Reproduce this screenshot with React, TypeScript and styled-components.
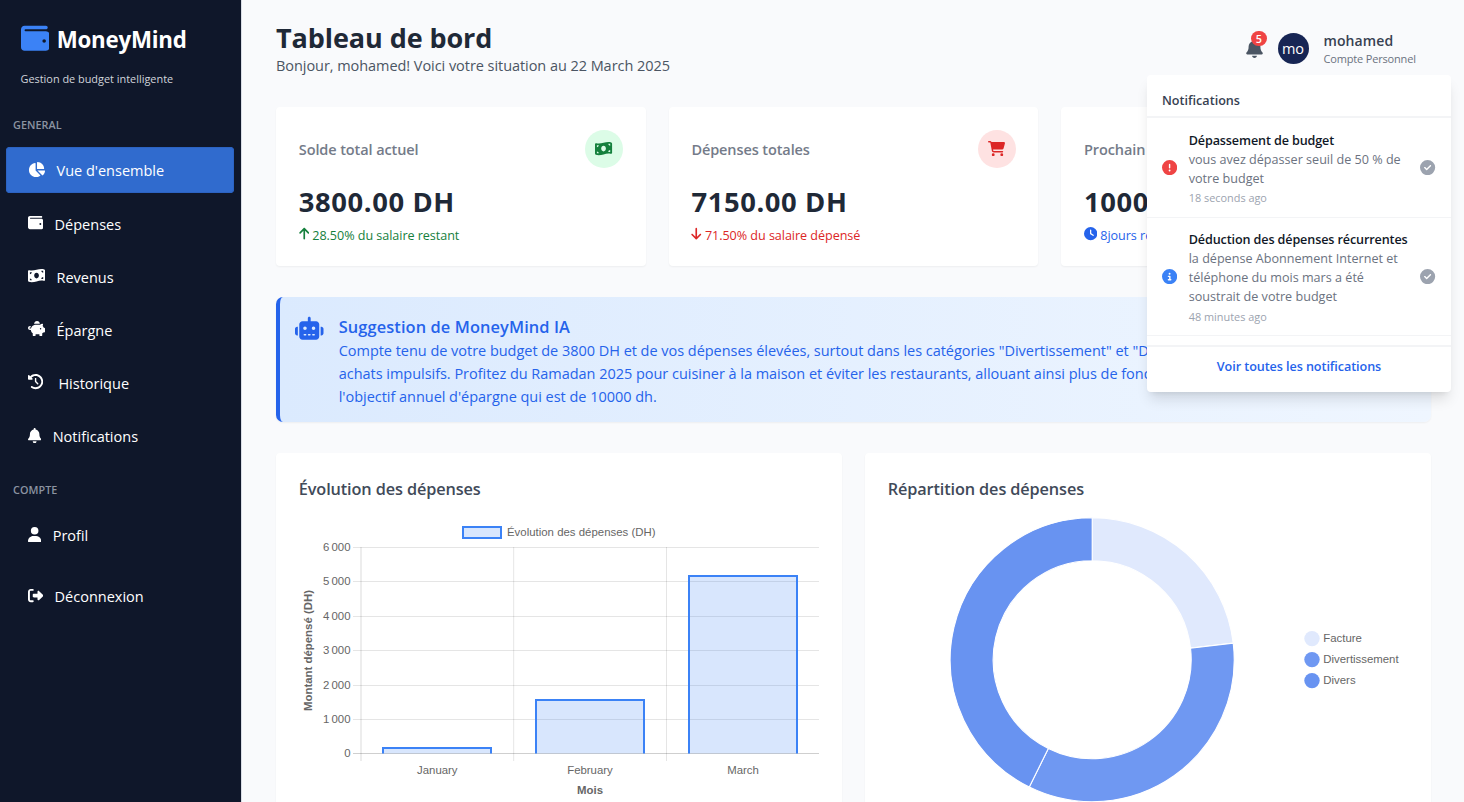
import React from "react";
import styled, { createGlobalStyle, css } from "styled-components";
import {
  FaWallet,
  FaChartPie,
  FaMoneyBillWave,
  FaPiggyBank,
  FaClockRotateLeft,
  FaBell,
  FaUser,
  FaRightFromBracket,
  FaArrowUp,
  FaArrowDown,
  FaCartShopping,
  FaClock,
  FaRobot,
  FaCircleExclamation,
  FaCircleInfo,
  FaCircleCheck,
  FaCalendar,
} from "react-icons/fa6";

const GlobalStyle = createGlobalStyle`
  *, *::before, *::after { box-sizing: border-box; }
  body {
    margin: 0;
    font-family: "Open Sans", "Noto Sans", sans-serif;
    background: #f9fafb;
    overflow: hidden;
  }
  h1, h2, h3, p { margin: 0; }
  svg { display: block; flex-shrink: 0; }
`;

const Page = styled.div`
  display: flex;
  width: 1464px;
  height: 802px;
  overflow: hidden;
  background: #f9fafc;
`;

/* Sidebar */

const Sidebar = styled.aside`
  width: 242px;
  flex-shrink: 0;
  background: #0f172a;
  border-right: 1px solid #d9dde5;
  color: #fff;
`;

const Brand = styled.div`
  display: flex;
  align-items: center;
  gap: 7.7px;
  padding: 20px 0 0 20.5px;
  height: 56px;
  color: #3b82f6;
`;

const BrandName = styled.span`
  color: #fff;
  font-size: 22.3px;
  line-height: 30px;
  font-weight: 700;
  letter-spacing: -0.22px;
  padding-top: 3px;
`;

const Tagline = styled.p`
  margin: 14px 0 0 20.5px;
  font-size: 10.9px;
  line-height: 18px;
  color: #d1d5db;
  white-space: nowrap;
`;

const SectionLabel = styled.div<{ $top: number }>`
  margin-top: ${(p) => p.$top}px;
  padding-left: 13px;
  font-size: 10.8px;
  line-height: 16px;
  font-weight: 600;
  letter-spacing: 0.05px;
  color: #8b93a1;
`;

const NavItem = styled.a<{ $active?: boolean; $gap?: number; $top?: number }>`
  display: flex;
  align-items: center;
  gap: ${(p) => p.$gap ?? 11.4}px;
  height: 45.6px;
  margin: ${(p) => p.$top ?? 7.6}px 7.3px 0 5.5px;
  padding: 4px 22.5px 0;
  border-radius: 4px;
  font-size: 14.5px;
  line-height: 22.8px;
  color: #fff;
  ${(p) =>
    p.$active &&
    css`
      background: #306bce;
      box-shadow: inset 0 0 0 1px #2c63c2;
    `}
  svg {
    margin-top: -5px;
  }
`;

/* Main column */

const Main = styled.main`
  flex: 1;
  padding: 22px 33px 0 34px;
`;

const Header = styled.header`
  position: relative;
  display: flex;
  justify-content: space-between;
  height: 85px;
`;

const Title = styled.h1`
  margin-top: -1px;
  font-size: 27px;
  line-height: 34px;
  font-weight: 700;
  color: #1f2937;
  letter-spacing: -0.08px;
`;

const Subtitle = styled.p`
  margin-top: 1px;
  font-size: 14.5px;
  line-height: 20px;
  letter-spacing: -0.055px;
  color: #4b5563;
  white-space: nowrap;
`;

const Account = styled.div`
  display: flex;
  align-items: flex-start;
  padding: 8px 15px 0 0;
`;

const BellWrap = styled.div`
  position: relative;
  margin: 9px 15px 0 0;
  color: #4b5563;
`;

const Badge = styled.span`
  position: absolute;
  top: -8.5px;
  left: 5.5px;
  width: 15.5px;
  height: 15.5px;
  border-radius: 50%;
  background: #ef4444;
  color: #fff;
  font-size: 10.8px;
  line-height: 15.5px;
  font-weight: 600;
  text-align: center;
`;

const Avatar = styled.div`
  width: 31px;
  height: 31px;
  margin: 2.5px 15px 0 0;
  border-radius: 50%;
  background: #172554;
  color: #fff;
  font-size: 14.5px;
  line-height: 31px;
  text-align: center;
`;

const UserName = styled.div`
  font-size: 14px;
  line-height: 22px;
  font-weight: 600;
  letter-spacing: 0.1px;
  color: #374151;
`;

const UserKind = styled.div`
  width: 92.5px;
  margin-top: -1px;
  font-size: 11px;
  line-height: 15px;
  letter-spacing: -0.17px;
  color: #6b7280;
  white-space: nowrap;
`;

/* Notifications dropdown */

const Dropdown = styled.section`
  position: absolute;
  z-index: 5;
  top: 53px;
  right: -20px;
  width: 304px;
  height: 317px;
  background: #fff;
  border-radius: 4px;
  box-shadow: 0 9.5px 14px -3px rgba(0, 0, 0, 0.12), 0 4px 6px -4px rgba(0, 0, 0, 0.1);
`;

const DropdownTitle = styled.h3`
  height: 43px;
  padding: 16px 15px 0;
  border-bottom: 2px solid #f3f4f6;
  font-size: 12.6px;
  line-height: 20px;
  font-weight: 600;
  color: #374151;
`;

const Notice = styled.article<{ $height: number }>`
  display: flex;
  align-items: center;
  height: ${(p) => p.$height}px;
  padding: 0 15.5px 0 15px;
  border-bottom: 1px solid #f3f4f6;
`;

const NoticeBody = styled.div`
  flex: 1;
  margin-left: 11.5px;
  padding-top: 3px;
  white-space: nowrap;
`;

const NoticeTitle = styled.div`
  font-size: 12.6px;
  line-height: 19px;
  font-weight: 600;
  letter-spacing: -0.12px;
  color: #111827;
`;

const NoticeText = styled.p`
  font-size: 12.6px;
  line-height: 19px;
  color: #6b7280;
`;

const NoticeTime = styled.div`
  margin-top: 1.5px;
  font-size: 10.9px;
  line-height: 18px;
  color: #9ca3af;
`;

const SeeAll = styled.a`
  display: block;
  margin-top: 9px;
  padding-top: 9px;
  border-top: 2px solid #f3f4f6;
  text-align: center;
  font-size: 12.6px;
  line-height: 22px;
  font-weight: 600;
  letter-spacing: -0.07px;
  color: #2563eb;
`;

/* Cards */

const StatGrid = styled.section`
  display: grid;
  grid-template-columns: repeat(3, 1fr);
  gap: 22.8px;
`;

const Card = styled.article`
  background: #fff;
  border-radius: 4px;
  box-shadow: 0 1px 2px rgba(0, 0, 0, 0.05);
`;

const StatCard = styled(Card)`
  height: 159px;
  padding: 22.5px 22.8px 0;
`;

const StatHead = styled.div`
  display: flex;
  align-items: center;
  justify-content: space-between;
`;

const StatLabel = styled.h2`
  padding-top: 2px;
  font-size: 14.5px;
  line-height: 22px;
  font-weight: 600;
  letter-spacing: -0.1px;
  color: #747b89;
`;

const IconDisc = styled.div<{ $bg: string; $fg: string }>`
  display: flex;
  align-items: center;
  justify-content: center;
  width: 38px;
  height: 38px;
  border-radius: 50%;
  background: ${(p) => p.$bg};
  color: ${(p) => p.$fg};
`;

const StatValue = styled.div`
  margin-top: 16px;
  font-size: 27.4px;
  line-height: 35px;
  font-weight: 700;
  letter-spacing: 0.6px;
  color: #1f2937;
`;

const StatNote = styled.div<{ $color: string }>`
  display: flex;
  align-items: center;
  gap: 3px;
  margin-top: 7px;
  font-size: 12.6px;
  line-height: 19px;
  letter-spacing: -0.05px;
  color: ${(p) => p.$color};
  svg {
    margin-top: -2px;
  }
`;

const Suggestion = styled.section`
  display: flex;
  gap: 15.2px;
  height: 125px;
  margin-top: 31px;
  padding: 17px 15px 0;
  border-left: 4px solid #2563eb;
  border-radius: 7px;
  background: linear-gradient(90deg, #dbeafe, #eff6ff);
  box-shadow: 0 1px 2px rgba(0, 0, 0, 0.05);
  color: #2563eb;
  white-space: nowrap;
  > svg {
    margin-top: -0.5px;
  }
`;

const SuggestionTitle = styled.h2`
  font-size: 16.4px;
  line-height: 25px;
  font-weight: 600;
  letter-spacing: 0.1px;
`;

const SuggestionText = styled.p`
  font-size: 14.5px;
  line-height: 23px;
  letter-spacing: -0.03px;
`;

const ChartGrid = styled.section`
  display: grid;
  grid-template-columns: repeat(2, 1fr);
  gap: 22.8px;
  margin-top: 31px;
`;

const ChartCard = styled(Card)`
  height: 380px;
  padding-top: 23px;
`;

const ChartTitle = styled.h2`
  padding-left: 22.8px;
  height: 34px;
  font-size: 16.3px;
  line-height: 27px;
  font-weight: 600;
  letter-spacing: -0.12px;
  color: #414a59;
`;

const ChartSvg = styled.svg`
  font-family: "Liberation Sans", Arial, sans-serif;
  font-size: 11.4px;
  fill: #666;
`;

const yTicks = ["6 000", "5 000", "4 000", "3 000", "2 000", "1 000", "0"];
const yLines = [547.5, 581.5, 616.5, 650.5, 685.5, 719.5, 753.5];
const bars = [
  { month: "January", x: 382, top: 747, center: 437.3 },
  { month: "February", x: 535, top: 699, center: 590 },
  { month: "March", x: 688, top: 575, center: 743 },
];

function BarChart() {
  return (
    <ChartSvg width="566" height="292" viewBox="276 510 566 292">
      <rect x="463" y="527" width="38" height="11" fill="#d8e6fd" stroke="#3b82f6" strokeWidth="2" />
      <text x="507" y="536" textLength="148.5">Évolution des dépenses (DH)</text>
      {yLines.map((y, i) => (
        <g key={y}>
          <line x1="353" x2="819" y1={y} y2={y} stroke={i === 6 ? "#cfcfcf" : "#e5e5e5"} />
          <text x="350.5" y={y + 3.4} textAnchor="end" wordSpacing="-1">{yTicks[i]}</text>
        </g>
      ))}
      <line x1="361" x2="361" y1="547" y2="761" stroke="#000" strokeOpacity="0.07" strokeWidth="2" />
      <line x1="513.7" x2="513.7" y1="547" y2="761" stroke="#000" strokeOpacity="0.1" />
      <line x1="666.5" x2="666.5" y1="547" y2="761" stroke="#000" strokeOpacity="0.1" />
      {bars.map((b) => (
        <g key={b.month}>
          <rect x={b.x} y={b.top} width="110" height={753.5 - b.top} fill="#3b82f6" fillOpacity="0.2" />
          <path
            d={`M${b.x + 1} 753.5V${b.top + 1}H${b.x + 109}V753.5`}
            fill="none"
            stroke="#3b82f6"
            strokeWidth="2"
          />
          <text x={b.center} y="774" textAnchor="middle">{b.month}</text>
        </g>
      ))}
      <text x="590" y="794" textAnchor="middle" fontWeight="700">Mois</text>
      <text transform="translate(312.4 650.5) rotate(-90)" textAnchor="middle" fontWeight="700" textLength="121">
        Montant dépensé (DH)
      </text>
    </ChartSvg>
  );
}

const CX = 1092.2;
const CY = 659.7;
const point = (r: number, deg: number) => {
  const a = ((deg - 90) * Math.PI) / 180;
  return `${CX + r * Math.cos(a)} ${CY + r * Math.sin(a)}`;
};
const ringSlice = (from: number, to: number) =>
  `M${point(142, from)}A142 142 0 0 1 ${point(142, to)}L${point(99, to)}A99 99 0 0 0 ${point(99, from)}Z`;

const slices = [
  { name: "Facture", from: 0, to: 83.3, color: "#e0e9fd" },
  { name: "Divertissement", from: 83.3, to: 206.3, color: "#6f98f2" },
  { name: "Divers", from: 206.3, to: 360, color: "#6893f1" },
];

function DoughnutChart() {
  return (
    <ChartSvg width="566" height="292" viewBox="865 510 566 292">
      {slices.map((s, i) => (
        <g key={s.name}>
          <path d={ringSlice(s.from, s.to)} fill={s.color} stroke="#fff" strokeWidth="1.1" />
          <circle cx="1312" cy={638.6 + i * 21} r="7.7" fill={s.color} />
          <text x="1323.3" y={642 + i * 21}>{s.name}</text>
        </g>
      ))}
    </ChartSvg>
  );
}

const IconBox = ({ icon: Icon, w, h }: { icon: React.ElementType; w: number; h: number }) => (
  <Icon width={w} height={h} size={undefined} style={{ width: w, height: h }} />
);

export default function App() {
  return (
    <>
      <GlobalStyle />
      <Page>
        <Sidebar>
          <Brand>
            <IconBox icon={FaWallet} w={28.5} h={28.5} />
            <BrandName>MoneyMind</BrandName>
          </Brand>
          <Tagline>Gestion de budget intelligente</Tagline>
          <SectionLabel $top={29}>GENERAL</SectionLabel>
          <NavItem $active $top={14}><IconBox icon={FaChartPie} w={17.1} h={15.2} />Vue d'ensemble</NavItem>
          <NavItem><IconBox icon={FaWallet} w={15.2} h={15.2} />Dépenses</NavItem>
          <NavItem><IconBox icon={FaMoneyBillWave} w={17.1} h={15.2} />Revenus</NavItem>
          <NavItem><IconBox icon={FaPiggyBank} w={17.1} h={15.2} />Épargne</NavItem>
          <NavItem $gap={15.2}><IconBox icon={FaClockRotateLeft} w={15.2} h={15.2} />Historique</NavItem>
          <NavItem><IconBox icon={FaBell} w={13.3} h={15.2} />Notifications</NavItem>
          <SectionLabel $top={23}>COMPTE</SectionLabel>
          <NavItem $top={14.5}><IconBox icon={FaUser} w={13.3} h={15.2} />Profil</NavItem>
          <NavItem $top={15.2}><IconBox icon={FaRightFromBracket} w={15.2} h={15.2} />Déconnexion</NavItem>
        </Sidebar>
        <Main>
          <Header>
            <div>
              <Title>Tableau de bord</Title>
              <Subtitle>Bonjour, mohamed! Voici votre situation au 22 March 2025</Subtitle>
            </div>
            <Account>
              <BellWrap>
                <IconBox icon={FaBell} w={17} h={19} />
                <Badge>5</Badge>
              </BellWrap>
              <Avatar>mo</Avatar>
              <div>
                <UserName>mohamed</UserName>
                <UserKind>Compte Personnel</UserKind>
              </div>
            </Account>
            <Dropdown>
              <DropdownTitle>Notifications</DropdownTitle>
              <Notice $height={99.5}>
                <FaCircleExclamation size={15.2} color="#ef4444" />
                <NoticeBody>
                  <NoticeTitle>Dépassement de budget</NoticeTitle>
                  <NoticeText>vous avez dépasser seuil de 50 % de<br />votre budget</NoticeText>
                  <NoticeTime>18 seconds ago</NoticeTime>
                </NoticeBody>
                <FaCircleCheck size={15.2} color="#9ca3af" />
              </Notice>
              <Notice $height={118.5}>
                <FaCircleInfo size={15.2} color="#3b82f6" />
                <NoticeBody>
                  <NoticeTitle>Déduction des dépenses récurrentes</NoticeTitle>
                  <NoticeText>la dépense Abonnement Internet et<br />téléphone du mois mars a été<br />soustrait de votre budget</NoticeText>
                  <NoticeTime>48 minutes ago</NoticeTime>
                </NoticeBody>
                <FaCircleCheck size={15.2} color="#9ca3af" />
              </Notice>
              <SeeAll>Voir toutes les notifications</SeeAll>
            </Dropdown>
          </Header>
          <StatGrid>
            <StatCard>
              <StatHead>
                <StatLabel>Solde total actuel</StatLabel>
                <IconDisc $bg="#dcfce7" $fg="#15803d"><IconBox icon={FaMoneyBillWave} w={17.1} h={15.2} /></IconDisc>
              </StatHead>
              <StatValue>3800.00 DH</StatValue>
              <StatNote $color="#15803d"><IconBox icon={FaArrowUp} w={10.5} h={13.3} />28.50% du salaire restant</StatNote>
            </StatCard>
            <StatCard>
              <StatHead>
                <StatLabel>Dépenses totales</StatLabel>
                <IconDisc $bg="#fee2e2" $fg="#dc2626"><IconBox icon={FaCartShopping} w={17.1} h={15.2} /></IconDisc>
              </StatHead>
              <StatValue>7150.00 DH</StatValue>
              <StatNote $color="#dc2626"><IconBox icon={FaArrowDown} w={10.5} h={13.3} />71.50% du salaire dépensé</StatNote>
            </StatCard>
            <StatCard>
              <StatHead>
                <StatLabel>Prochain salaire</StatLabel>
                <IconDisc $bg="#dbeafe" $fg="#2563eb"><IconBox icon={FaCalendar} w={13.3} h={15.2} /></IconDisc>
              </StatHead>
              <StatValue>10000 DH</StatValue>
              <StatNote $color="#2563eb"><IconBox icon={FaClock} w={13.3} h={13.3} />8jours restants</StatNote>
            </StatCard>
          </StatGrid>
          <Suggestion>
            <IconBox icon={FaRobot} w={28.5} h={28.5} />
            <div>
              <SuggestionTitle>Suggestion de MoneyMind IA</SuggestionTitle>
              <SuggestionText>
                Compte tenu de votre budget de 3800 DH et de vos dépenses élevées, surtout dans les catégories "Divertissement" et "Divers",<br />
                achats impulsifs. Profitez du Ramadan 2025 pour cuisiner à la maison et éviter les restaurants, allouant ainsi plus de fonds à<br />
                l'objectif annuel d'épargne qui est de 10000 dh.
              </SuggestionText>
            </div>
          </Suggestion>
          <ChartGrid>
            <ChartCard>
              <ChartTitle>Évolution des dépenses</ChartTitle>
              <BarChart />
            </ChartCard>
            <ChartCard>
              <ChartTitle>Répartition des dépenses</ChartTitle>
              <DoughnutChart />
            </ChartCard>
          </ChartGrid>
        </Main>
      </Page>
    </>
  );
}
